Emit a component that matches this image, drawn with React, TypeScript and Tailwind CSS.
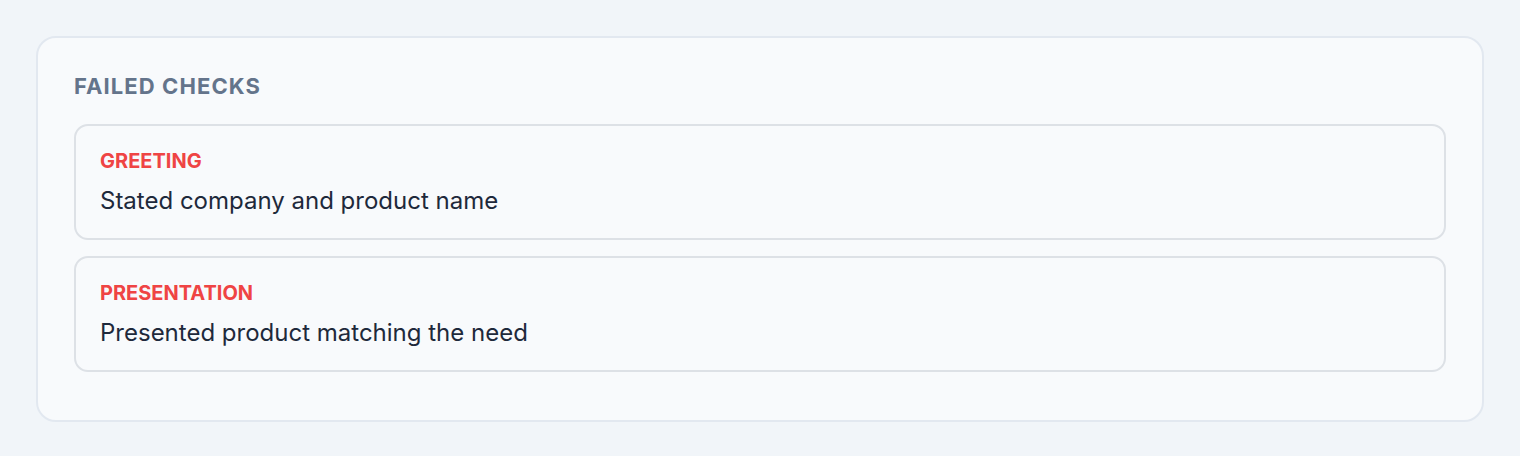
import React from "react";

const items = [
  { label: "GREETING", text: "Stated company and product name" },
  { label: "PRESENTATION", text: "Presented product matching the need" },
];

export default function App() {
  return (
    <div className="min-h-[456px] bg-[#f1f5f9] p-[36px]" style={{ fontFamily: "Inter, 'Noto Sans', sans-serif" }}>
      <div className="rounded-[20px] border-2 border-[#e2e8f0] bg-[#f8fafc] px-[36px] pt-[34px] pb-[48px]">
        <h2 className="text-[22px] leading-[28px] font-bold tracking-[0.05em] text-[#64748b]">FAILED CHECKS</h2>
        <div className="mt-[24px] flex flex-col gap-[16px]">
          {items.map((it) => (
            <div key={it.label} className="rounded-[14px] border-2 border-[#dde1e6] px-[24px] pt-[21px] pb-[21px]">
              <div className="text-[20px] leading-[28px] font-bold text-[#ef4444]">{it.label}</div>
              <div className="mt-[10px] text-[24px] leading-[32px] text-[#1e293b]">{it.text}</div>
            </div>
          ))}
        </div>
      </div>
    </div>
  );
}
